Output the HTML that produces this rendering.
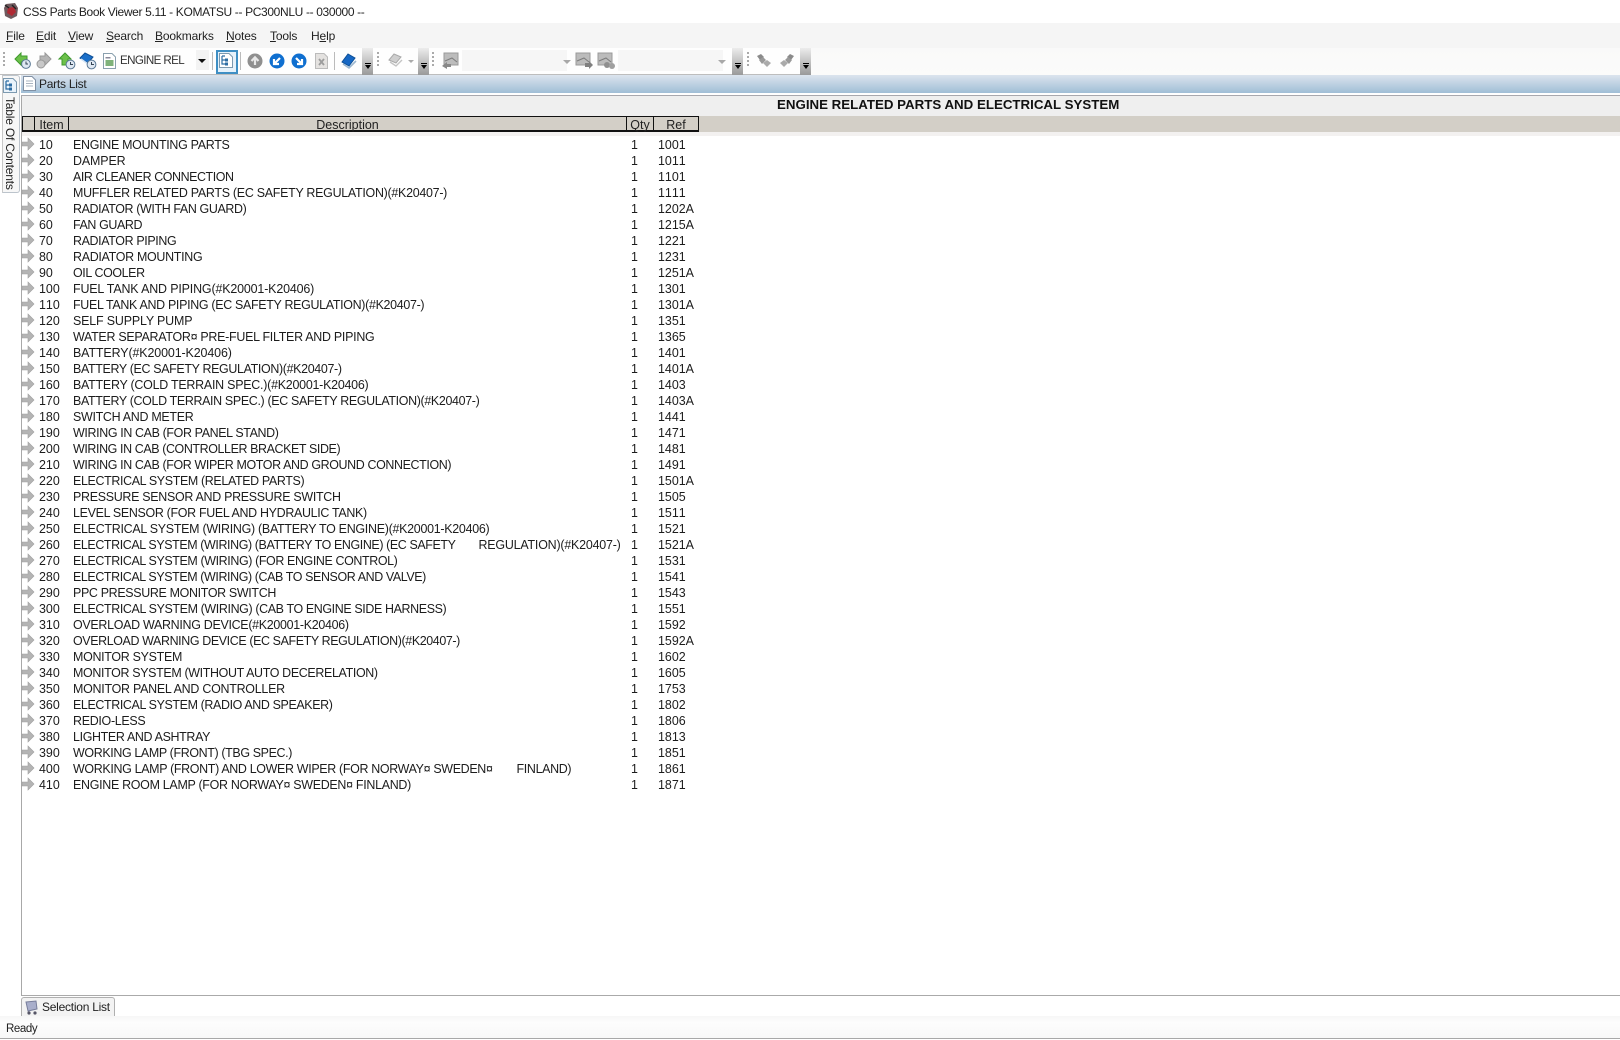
<!DOCTYPE html>
<html><head><meta charset="utf-8"><title>CSS Parts Book Viewer</title>
<style>
html,body{margin:0;padding:0;background:#fff}
#p{position:relative;width:1620px;height:1040px;overflow:hidden;background:#fff;font-family:"Liberation Sans",sans-serif;color:#111}
.a{position:absolute}
.t{position:absolute;white-space:pre;font-size:12px;line-height:16px;color:#222}
.m{letter-spacing:-.15px}
u{text-decoration:underline}
.ch{position:absolute;top:48px;height:27px;width:11px;background:linear-gradient(#ececec,#999)}
.ch:after{content:"";position:absolute;left:3px;top:17px;border:3px solid transparent;border-top:4px solid #000;border-bottom:0}
.ch:before{content:"";position:absolute;left:3px;top:15px;width:6px;height:1px;background:#000}
.g{position:absolute;top:52px;width:2px;height:16px;background:repeating-linear-gradient(#aaa 0 2px,transparent 2px 4px)}
.s{position:absolute;top:52px;width:1px;height:18px;background:#bbb}
svg{position:absolute;overflow:visible}
#rows{position:absolute;left:0;top:137px}
.r{position:relative;height:16px;width:720px;font-size:12.45px;line-height:17px;color:#1c1c1c;white-space:nowrap}
.r i,.r b,.r em,.r s{position:absolute;top:0;font-style:normal;font-weight:normal;text-decoration:none}
.r i{left:39px;font-kerning:none}.r b{left:73px;letter-spacing:-.29px}.r em{left:631px}.r s{left:658px;font-kerning:none}
.r svg{left:22px;top:.5px}
.gp{display:inline-block}
.hd{position:absolute;top:118px;text-align:center;font-size:12.5px;line-height:15px;color:#222}
</style></head><body><div id="p">

<!-- title bar -->
<svg style="left:3px;top:2px" width="16" height="18" viewBox="0 0 16 18"><path d="M3 2 L12 1 L15 6 L14 14 L8 17 L2 14 L1 6Z" fill="#6f5a5e"/><path d="M5 6 L11 5 L13 10 L9 14 L4 11Z" fill="#b02a34"/><path d="M2 3 L6 6 M9 3 L13 7" stroke="#222" stroke-width="1.4"/></svg>
<div class="t" style="left:23px;top:4px;font-size:12px;letter-spacing:-.35px">CSS Parts Book Viewer 5.11 - KOMATSU -- PC300NLU -- 030000 --</div>

<!-- menu -->
<div class="a" style="left:0;top:23px;width:1620px;height:25px;background:#f5f5f5"></div>
<div class="t m" style="left:6px;top:28px"><u>F</u>ile</div>
<div class="t m" style="left:36px;top:28px"><u>E</u>dit</div>
<div class="t m" style="left:68px;top:28px"><u>V</u>iew</div>
<div class="t m" style="left:106px;top:28px"><u>S</u>earch</div>
<div class="t m" style="left:155px;top:28px"><u>B</u>ookmarks</div>
<div class="t m" style="left:226px;top:28px"><u>N</u>otes</div>
<div class="t m" style="left:270px;top:28px"><u>T</u>ools</div>
<div class="t m" style="left:311px;top:28px">H<u>e</u>lp</div>

<!-- toolbar -->
<div class="a" style="left:0;top:48px;width:1620px;height:27px;background:linear-gradient(#f9f9f9,#fbfbfa)"></div>
<div class="a" style="left:0;top:48px;width:811px;height:26px;background:#fefefe;border-bottom:1px solid #bdbdbd"></div>
<div class="g" style="left:3px"></div>

<svg style="left:14px;top:52px" width="18" height="18" viewBox="0 0 18 18"><path d="M1 7 L7 1 L7 4 L13 4 L13 10 L7 10 L7 13Z" fill="#6cc04a" stroke="#3e9a2c"/><circle cx="12" cy="12" r="4.4" fill="#dfe8f2" stroke="#5a7894"/><path d="M12 9.5V12H14" stroke="#345" fill="none"/></svg>
<svg style="left:36px;top:52px" width="16" height="18" viewBox="0 0 16 18"><path d="M15 7 L9 1 L9 4 L4 4 L4 10 L9 10 L9 13Z" fill="#b5b5b5" stroke="#999"/><circle cx="5" cy="12" r="4" fill="#c8c8c8" stroke="#999"/></svg>
<svg style="left:59px;top:52px" width="18" height="18" viewBox="0 0 18 18"><path d="M6 1 L12 7 L9 7 L9 13 L3 13 L3 7 L0 7Z" fill="#6cc04a" stroke="#3e9a2c"/><circle cx="11.5" cy="12.5" r="4.4" fill="#dfe8f2" stroke="#5a7894"/><path d="M11.5 10V12.5H14" stroke="#345" fill="none"/></svg>
<svg style="left:79px;top:52px" width="18" height="18" viewBox="0 0 18 18"><path d="M1 6 L6 1 L14 5 L9 11Z" fill="#1a6fc9" stroke="#0d4f96"/><path d="M2 7 L9 12" stroke="#cfe2f5" stroke-width="1.5"/><circle cx="12.5" cy="12.5" r="4.4" fill="#dfe8f2" stroke="#5a7894"/><path d="M12.5 10V12.5H15" stroke="#345" fill="none"/></svg>
<svg style="left:103px;top:53px" width="13" height="16" viewBox="0 0 13 16"><path d="M.5.5H9L12.5 4V15.5H.5Z" fill="#fff" stroke="#8aa0ae"/><rect x="2.5" y="7" width="8" height="6" fill="#7fb27a"/><rect x="2.5" y="4" width="5" height="1.5" fill="#889"/></svg>
<div class="t" style="left:120px;top:53px;font-size:11.6px;letter-spacing:-.62px;color:#333">ENGINE REL</div>
<div class="a" style="left:196px;top:50px;width:13px;height:20px;background:#f3f3f3"></div>
<div class="a" style="left:198px;top:59px;border:4px solid transparent;border-top:4px solid #111;border-bottom:0"></div>
<div class="s" style="left:212px"></div>
<div class="a" style="left:216px;top:50px;width:18px;height:20px;background:#e6f2fb;border:2px solid #3f8fc4"></div>
<svg style="left:219px;top:53px" width="14" height="15" viewBox="0 0 14 15"><path d="M.5.5H10L13.5 4V14.5H.5Z" fill="#fff" stroke="#7d9ab0"/><path d="M3 3H6M3 3V11H6M3 7H6" stroke="#2d6da3" fill="none" stroke-width="1.2"/><rect x="6" y="5.5" width="3" height="3" fill="#2d6da3"/><rect x="6" y="9.5" width="3" height="3" fill="#2d6da3"/></svg>
<div class="s" style="left:240px"></div>
<svg style="left:247px;top:53px" width="16" height="16" viewBox="0 0 16 16"><circle cx="8" cy="8" r="7.5" fill="#8f8f8f"/><path d="M8 12V5M4.5 8 8 4.3 11.5 8" stroke="#e8e8e8" stroke-width="2.2" fill="none"/></svg>
<svg style="left:269px;top:53px" width="16" height="16" viewBox="0 0 16 16"><circle cx="8" cy="8" r="7.5" fill="#0f6fd0"/><path d="M11 5 5.5 10.5M5 6V11H10" stroke="#fff" stroke-width="2.2" fill="none"/></svg>
<svg style="left:291px;top:53px" width="16" height="16" viewBox="0 0 16 16"><circle cx="8" cy="8" r="7.5" fill="#0f6fd0"/><path d="M5 5 10.5 10.5M11 6V11H6" stroke="#fff" stroke-width="2.2" fill="none"/></svg>
<svg style="left:315px;top:53px" width="13" height="16" viewBox="0 0 13 16"><path d="M.5.5H9L12.5 4V15.5H.5Z" fill="#e4e2e0" stroke="#bbb"/><path d="M4 6 9 12M9 6 4 12" stroke="#9d9d9d" stroke-width="1.8"/></svg>
<div class="s" style="left:334px"></div>
<svg style="left:342px;top:53px" width="15" height="16" viewBox="0 0 15 16"><path d="M0 9 6 1 13 5 7 13Z" fill="#1667c4" stroke="#0d4f96"/><path d="M1 11 7 15 14 8" stroke="#9cb7cf" fill="none" stroke-width="1.6"/></svg>
<div class="ch" style="left:362px"></div>

<div class="g" style="left:377px"></div>
<svg style="left:388px;top:53px" width="15" height="14" viewBox="0 0 15 14"><path d="M1 7 6 1 13 4 8 10Z" fill="#cfcfcf" stroke="#aaa"/><path d="M2 9 8 13 14 7" stroke="#c4c4c4" fill="none" stroke-width="1.4"/></svg>
<div class="a" style="left:408px;top:60px;border:3px solid transparent;border-top:3px solid #aaa;border-bottom:0"></div>
<div class="ch" style="left:418px"></div>
<div class="g" style="left:432px"></div>
<svg style="left:442px;top:53px" width="17" height="16" viewBox="0 0 17 16"><rect x="2" y="0" width="14" height="12" fill="#bcbcbc" stroke="#9a9a9a"/><path d="M3 8 10 5 15 9" stroke="#7c7c7c" fill="none"/><path d="M0 13 5 9 5 16Z" fill="#888"/><rect x="3" y="11" width="6" height="3" fill="#888"/></svg>
<div class="a" style="left:462px;top:50px;width:105px;height:21px;background:#f6f6f6"></div>
<div class="a" style="left:563px;top:60px;border:4px solid transparent;border-top:4px solid #a8a8a8;border-bottom:0"></div>
<svg style="left:576px;top:53px" width="17" height="16" viewBox="0 0 17 16"><rect x="0" y="0" width="14" height="12" fill="#bcbcbc" stroke="#9a9a9a"/><path d="M1 8 8 5 13 9" stroke="#7c7c7c" fill="none"/><path d="M9 10H13V8L17 12 13 16V14H9Z" fill="#808080"/></svg>
<svg style="left:598px;top:53px" width="17" height="16" viewBox="0 0 17 16"><rect x="0" y="0" width="14" height="12" fill="#bcbcbc" stroke="#9a9a9a"/><path d="M1 8 8 5 13 9" stroke="#7c7c7c" fill="none"/><circle cx="9" cy="12" r="3" fill="#8f8f8f"/><circle cx="14" cy="13" r="3" fill="#a0a0a0"/></svg>
<div class="a" style="left:618px;top:50px;width:105px;height:21px;background:#f6f6f6"></div>
<div class="a" style="left:718px;top:60px;border:4px solid transparent;border-top:4px solid #a8a8a8;border-bottom:0"></div>
<div class="ch" style="left:732px"></div>
<div class="g" style="left:747px"></div>
<svg style="left:756px;top:53px" width="16" height="15" viewBox="0 0 16 15"><path d="M1 3 5 1 8 4 4 7Z" fill="#8a8a8a"/><path d="M3 7 7 4 10 7 6 11Z" fill="#999"/><path d="M7 10 11 7 15 10 11 14Z" fill="#aaa"/></svg>
<svg style="left:779px;top:53px" width="16" height="15" viewBox="0 0 16 15"><path d="M15 3 11 1 8 4 12 7Z" fill="#8a8a8a"/><path d="M13 7 9 4 6 7 10 11Z" fill="#999"/><path d="M9 10 5 7 1 10 5 14Z" fill="#aaa"/></svg>
<div class="ch" style="left:800px"></div>

<!-- Left tab strip -->
<div class="a" style="left:0;top:75px;width:21px;height:920px;background:#fff"></div>
<div class="a" style="left:2px;top:75px;width:16px;height:116px;background:#f7f7f7;border:1px solid #bcc4cc;border-left:1px solid #c8c8c8;border-radius:0 3px 3px 0"></div>
<svg style="left:3px;top:78px" width="14" height="15" viewBox="0 0 14 15"><path d="M.5.5H10L13.5 4V14.5H.5Z" fill="#eaf3fb" stroke="#7d9ab0"/><path d="M3 3H6M3 3V11H6M3 7H6" stroke="#2d6da3" fill="none" stroke-width="1.2"/><rect x="6" y="5.5" width="3" height="3" fill="#2d6da3"/><rect x="6" y="9.5" width="3" height="3" fill="#2d6da3"/></svg>
<div class="a" style="left:2px;top:97px;font-size:12px;letter-spacing:-.2px;line-height:15px;color:#222;writing-mode:vertical-rl;white-space:nowrap">Table Of Contents</div>

<!-- Parts list caption -->
<div class="a" style="left:21px;top:75px;width:1599px;height:18px;background:linear-gradient(#dce4ee,#a0bed6)"></div>
<svg style="left:23px;top:76px" width="13" height="15" viewBox="0 0 13 15"><path d="M.5.5H9L12.5 4V14.5H.5Z" fill="#fff" stroke="#8090a4"/><path d="M3 5H10M3 7.5H10M3 10H10" stroke="#aab4c0"/></svg>
<div class="t" style="left:39px;top:76px;font-size:12px;letter-spacing:-.25px">Parts List</div>

<!-- panel -->
<div class="a" style="left:21px;top:95px;width:1599px;height:899px;border-top:1px solid #a8a8ae;border-left:1px solid #a8a8a8;border-bottom:1px solid #aaa"></div>
<div class="a" style="left:22px;top:96px;width:1598px;height:20px;background:#efefef"></div>
<div class="a" style="left:777px;top:96px;white-space:nowrap;font-size:13.3px;line-height:18px;font-weight:bold;color:#111">ENGINE RELATED PARTS AND ELECTRICAL SYSTEM</div>
<div class="a" style="left:22px;top:116px;width:1598px;height:16px;background:#d3cfc7"></div>
<div class="a" style="left:22px;top:132px;width:1598px;height:4px;background:#f3f1f0"></div>
<div class="a" style="left:22px;top:116px;width:675px;height:13px;border:1px solid #111;border-bottom:2px solid #111"></div>
<div class="a" style="left:34px;top:116px;width:1px;height:15px;background:#111"></div>
<div class="a" style="left:68px;top:116px;width:1px;height:15px;background:#111"></div>
<div class="a" style="left:626px;top:116px;width:1px;height:15px;background:#111"></div>
<div class="a" style="left:653px;top:116px;width:1px;height:15px;background:#111"></div>
<div class="hd" style="left:35px;width:33px">Item</div>
<div class="hd" style="left:69px;width:557px">Description</div>
<div class="hd" style="left:627px;width:26px">Qty</div>
<div class="hd" style="left:654px;width:44px">Ref</div>

<svg width="0" height="0" style="left:0;top:0"><defs><path id="ar" d="M0 4H6V0L12 6 6 12V8H0Z" fill="#b4b4b4" stroke="#a0a0a0" stroke-width=".6"/></defs></svg>

<div id="rows">
<div class="r"><svg width="12" height="12"><use href="#ar"/></svg><i>10</i><b>ENGINE MOUNTING PARTS</b><em>1</em><s>1001</s></div>
<div class="r"><svg width="12" height="12"><use href="#ar"/></svg><i>20</i><b style="letter-spacing:-.12px">DAMPER</b><em>1</em><s>1011</s></div>
<div class="r"><svg width="12" height="12"><use href="#ar"/></svg><i>30</i><b style="letter-spacing:-.43px">AIR CLEANER CONNECTION</b><em>1</em><s>1101</s></div>
<div class="r"><svg width="12" height="12"><use href="#ar"/></svg><i>40</i><b style="letter-spacing:-.27px">MUFFLER RELATED PARTS (EC SAFETY REGULATION)(#K20407-)</b><em>1</em><s>1111</s></div>
<div class="r"><svg width="12" height="12"><use href="#ar"/></svg><i>50</i><b style="letter-spacing:-.37px">RADIATOR (WITH FAN GUARD)</b><em>1</em><s>1202A</s></div>
<div class="r"><svg width="12" height="12"><use href="#ar"/></svg><i>60</i><b style="letter-spacing:-.39px">FAN GUARD</b><em>1</em><s>1215A</s></div>
<div class="r"><svg width="12" height="12"><use href="#ar"/></svg><i>70</i><b style="letter-spacing:-.36px">RADIATOR PIPING</b><em>1</em><s>1221</s></div>
<div class="r"><svg width="12" height="12"><use href="#ar"/></svg><i>80</i><b>RADIATOR MOUNTING</b><em>1</em><s>1231</s></div>
<div class="r"><svg width="12" height="12"><use href="#ar"/></svg><i>90</i><b style="letter-spacing:-.39px">OIL COOLER</b><em>1</em><s>1251A</s></div>
<div class="r"><svg width="12" height="12"><use href="#ar"/></svg><i>100</i><b style="letter-spacing:-.15px">FUEL TANK AND PIPING(#K20001-K20406)</b><em>1</em><s>1301</s></div>
<div class="r"><svg width="12" height="12"><use href="#ar"/></svg><i>110</i><b style="letter-spacing:-.31px">FUEL TANK AND PIPING (EC SAFETY REGULATION)(#K20407-)</b><em>1</em><s>1301A</s></div>
<div class="r"><svg width="12" height="12"><use href="#ar"/></svg><i>120</i><b style="letter-spacing:-.16px">SELF SUPPLY PUMP</b><em>1</em><s>1351</s></div>
<div class="r"><svg width="12" height="12"><use href="#ar"/></svg><i>130</i><b style="letter-spacing:-.27px">WATER SEPARATOR¤ PRE-FUEL FILTER AND PIPING</b><em>1</em><s>1365</s></div>
<div class="r"><svg width="12" height="12"><use href="#ar"/></svg><i>140</i><b style="letter-spacing:-.11px">BATTERY(#K20001-K20406)</b><em>1</em><s>1401</s></div>
<div class="r"><svg width="12" height="12"><use href="#ar"/></svg><i>150</i><b style="letter-spacing:-.34px">BATTERY (EC SAFETY REGULATION)(#K20407-)</b><em>1</em><s>1401A</s></div>
<div class="r"><svg width="12" height="12"><use href="#ar"/></svg><i>160</i><b style="letter-spacing:-.24px">BATTERY (COLD TERRAIN SPEC.)(#K20001-K20406)</b><em>1</em><s>1403</s></div>
<div class="r"><svg width="12" height="12"><use href="#ar"/></svg><i>170</i><b style="letter-spacing:-.34px">BATTERY (COLD TERRAIN SPEC.) (EC SAFETY REGULATION)(#K20407-)</b><em>1</em><s>1403A</s></div>
<div class="r"><svg width="12" height="12"><use href="#ar"/></svg><i>180</i><b>SWITCH AND METER</b><em>1</em><s>1441</s></div>
<div class="r"><svg width="12" height="12"><use href="#ar"/></svg><i>190</i><b style="letter-spacing:-.36px">WIRING IN CAB (FOR PANEL STAND)</b><em>1</em><s>1471</s></div>
<div class="r"><svg width="12" height="12"><use href="#ar"/></svg><i>200</i><b style="letter-spacing:-.39px">WIRING IN CAB (CONTROLLER BRACKET SIDE)</b><em>1</em><s>1481</s></div>
<div class="r"><svg width="12" height="12"><use href="#ar"/></svg><i>210</i><b style="letter-spacing:-.37px">WIRING IN CAB (FOR WIPER MOTOR AND GROUND CONNECTION)</b><em>1</em><s>1491</s></div>
<div class="r"><svg width="12" height="12"><use href="#ar"/></svg><i>220</i><b style="letter-spacing:-.35px">ELECTRICAL SYSTEM (RELATED PARTS)</b><em>1</em><s>1501A</s></div>
<div class="r"><svg width="12" height="12"><use href="#ar"/></svg><i>230</i><b>PRESSURE SENSOR AND PRESSURE SWITCH</b><em>1</em><s>1505</s></div>
<div class="r"><svg width="12" height="12"><use href="#ar"/></svg><i>240</i><b style="letter-spacing:-.31px">LEVEL SENSOR (FOR FUEL AND HYDRAULIC TANK)</b><em>1</em><s>1511</s></div>
<div class="r"><svg width="12" height="12"><use href="#ar"/></svg><i>250</i><b style="letter-spacing:-.27px">ELECTRICAL SYSTEM (WIRING) (BATTERY TO ENGINE)(#K20001-K20406)</b><em>1</em><s>1521</s></div>
<div class="r"><svg width="12" height="12"><use href="#ar"/></svg><i>260</i><b style="letter-spacing:-.39px">ELECTRICAL SYSTEM (WIRING) (BATTERY TO ENGINE) (EC SAFETY<span class="gp" style="width:23px"></span><span style="letter-spacing:-.2px">REGULATION)(#K20407-)</span></b><em>1</em><s>1521A</s></div>
<div class="r"><svg width="12" height="12"><use href="#ar"/></svg><i>270</i><b style="letter-spacing:-.38px">ELECTRICAL SYSTEM (WIRING) (FOR ENGINE CONTROL)</b><em>1</em><s>1531</s></div>
<div class="r"><svg width="12" height="12"><use href="#ar"/></svg><i>280</i><b style="letter-spacing:-.39px">ELECTRICAL SYSTEM (WIRING) (CAB TO SENSOR AND VALVE)</b><em>1</em><s>1541</s></div>
<div class="r"><svg width="12" height="12"><use href="#ar"/></svg><i>290</i><b style="letter-spacing:-.33px">PPC PRESSURE MONITOR SWITCH</b><em>1</em><s>1543</s></div>
<div class="r"><svg width="12" height="12"><use href="#ar"/></svg><i>300</i><b style="letter-spacing:-.37px">ELECTRICAL SYSTEM (WIRING) (CAB TO ENGINE SIDE HARNESS)</b><em>1</em><s>1551</s></div>
<div class="r"><svg width="12" height="12"><use href="#ar"/></svg><i>310</i><b>OVERLOAD WARNING DEVICE(#K20001-K20406)</b><em>1</em><s>1592</s></div>
<div class="r"><svg width="12" height="12"><use href="#ar"/></svg><i>320</i><b style="letter-spacing:-.38px">OVERLOAD WARNING DEVICE (EC SAFETY REGULATION)(#K20407-)</b><em>1</em><s>1592A</s></div>
<div class="r"><svg width="12" height="12"><use href="#ar"/></svg><i>330</i><b>MONITOR SYSTEM</b><em>1</em><s>1602</s></div>
<div class="r"><svg width="12" height="12"><use href="#ar"/></svg><i>340</i><b style="letter-spacing:-.34px">MONITOR SYSTEM (WITHOUT AUTO DECERELATION)</b><em>1</em><s>1605</s></div>
<div class="r"><svg width="12" height="12"><use href="#ar"/></svg><i>350</i><b style="letter-spacing:-.25px">MONITOR PANEL AND CONTROLLER</b><em>1</em><s>1753</s></div>
<div class="r"><svg width="12" height="12"><use href="#ar"/></svg><i>360</i><b style="letter-spacing:-.37px">ELECTRICAL SYSTEM (RADIO AND SPEAKER)</b><em>1</em><s>1802</s></div>
<div class="r"><svg width="12" height="12"><use href="#ar"/></svg><i>370</i><b>REDIO-LESS</b><em>1</em><s>1806</s></div>
<div class="r"><svg width="12" height="12"><use href="#ar"/></svg><i>380</i><b style="letter-spacing:-.34px">LIGHTER AND ASHTRAY</b><em>1</em><s>1813</s></div>
<div class="r"><svg width="12" height="12"><use href="#ar"/></svg><i>390</i><b style="letter-spacing:-.36px">WORKING LAMP (FRONT) (TBG SPEC.)</b><em>1</em><s>1851</s></div>
<div class="r"><svg width="12" height="12"><use href="#ar"/></svg><i>400</i><b style="letter-spacing:-.33px">WORKING LAMP (FRONT) AND LOWER WIPER (FOR NORWAY¤ SWEDEN¤<span class="gp" style="width:24px"></span>FINLAND)</b><em>1</em><s>1861</s></div>
<div class="r"><svg width="12" height="12"><use href="#ar"/></svg><i>410</i><b>ENGINE ROOM LAMP (FOR NORWAY¤ SWEDEN¤ FINLAND)</b><em>1</em><s>1871</s></div>
</div>

<!-- Bottom tab -->
<div class="a" style="left:21px;top:997px;width:92px;height:19px;background:#f3f3f3;border:1px solid #b0b0b0;border-bottom:0;border-top-left-radius:3px;border-top-right-radius:3px"></div>
<svg style="left:25px;top:1000px" width="13" height="15" viewBox="0 0 13 15"><path d="M1 2 11 1 12 9 3 11Z" fill="#a8aecb" stroke="#777d9a"/><circle cx="4" cy="13" r="1.6" fill="#556"/><circle cx="10" cy="13" r="1.6" fill="#556"/></svg>
<div class="t" style="left:42px;top:999px;font-size:12px;letter-spacing:-.25px">Selection List</div>

<!-- Status bar -->
<div class="a" style="left:0;top:1016px;width:1620px;height:22px;background:linear-gradient(#f6f6f6,#fdfdfd 30%,#f8f8f8);border-bottom:1px solid #a8a8a8"></div>
<div class="t" style="left:6px;top:1021px;font-size:11.5px;letter-spacing:-.4px">Ready</div>
<div class="a" style="left:0;top:1039px;width:1620px;height:1px;background:#fff"></div>
</div></body></html>
